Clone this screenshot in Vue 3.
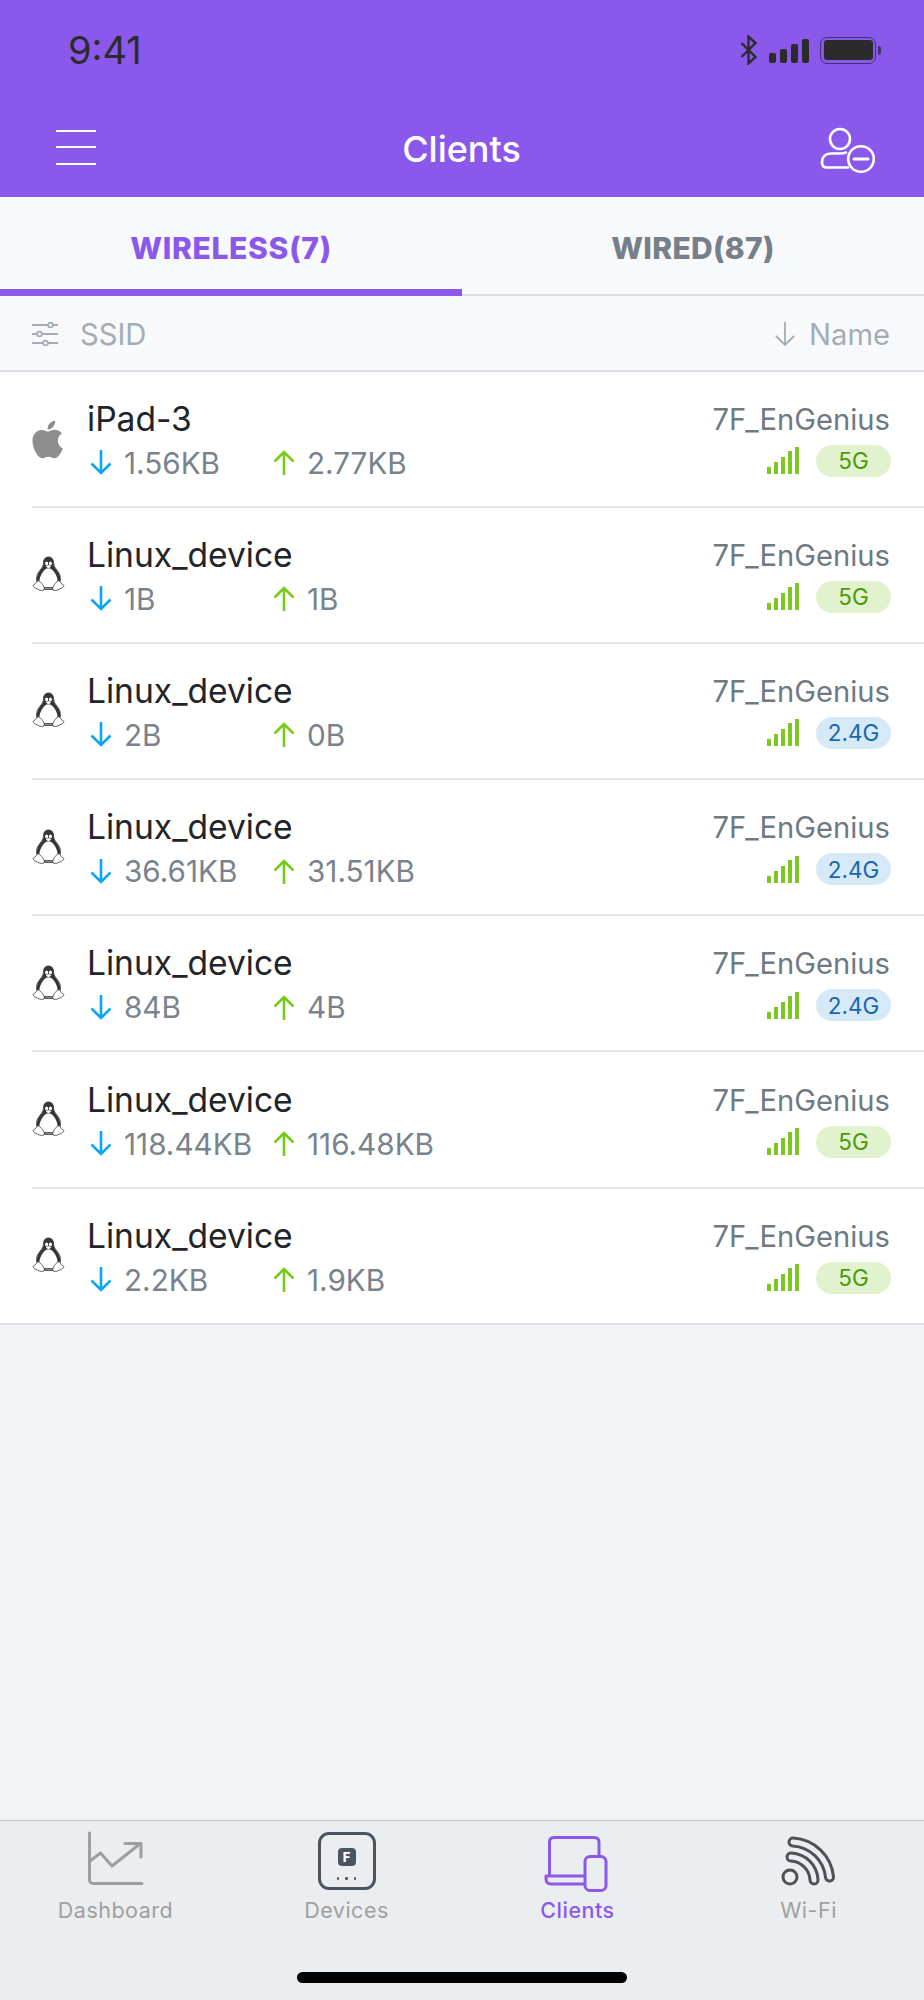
<template>
  <div class="phone">
    <header class="top">
      <div class="status">
        <span class="time">9:41</span>
        <div class="status-icons">
          <svg class="bt" viewBox="0 0 18 30" width="18" height="30">
            <path d="M1.5 8 15.5 22 8.5 28.5V1.5L15.5 8 1.5 22" fill="none" stroke="#2b2b2b" stroke-width="2.4" />
          </svg>
          <div class="cell">
            <i v-for="h in cellBars" :key="h" :style="{ height: h + 'px' }"></i>
          </div>
          <div class="battery"><div class="battery-fill"></div></div>
          <div class="battery-nub"></div>
        </div>
      </div>
      <div class="nav">
        <div class="burger"><i></i><i></i><i></i></div>
        <h1 class="title">Clients</h1>
        <svg class="person" viewBox="0 0 58 48" width="58" height="48" fill="none" stroke="#fff" stroke-width="2.6">
          <circle cx="21" cy="13" r="10" />
          <path d="M29 41.5H8C4.5 41.5 3 40 3 36.5C3 31 6.5 27.5 12 27.5H20C23 27.5 25 27.5 27 26.5" stroke-linecap="round" />
          <circle cx="42" cy="33" r="12.8" />
          <path d="M35 33H49" stroke-width="3" stroke-linecap="round" />
        </svg>
      </div>
    </header>

    <div class="tabs">
      <div class="tab active">WIRELESS(7)</div>
      <div class="tab">WIRED(87)</div>
    </div>

    <div class="sortbar">
      <div class="sort-left">
        <svg viewBox="0 0 26 24" width="26" height="24" fill="none" stroke="#a3adb8" stroke-width="1.8">
          <path d="M0 3H16M21 3H26M0 12H5M10 12H26M0 21H11M16 21H26" />
          <circle cx="18.5" cy="3" r="2.4" />
          <circle cx="7.5" cy="12" r="2.4" />
          <circle cx="13.5" cy="21" r="2.4" />
        </svg>
        <span>SSID</span>
      </div>
      <div class="sort-right">
        <svg viewBox="0 0 20 24" width="20" height="24" fill="none" stroke="#a3adb8" stroke-width="1.8">
          <path d="M10 0V23M1 14 10 23 19 14" />
        </svg>
        <span>Name</span>
      </div>
    </div>

    <div class="list">
      <div v-for="c in clients" :key="c.id" class="row">
        <div class="os">
          <svg v-if="c.os === 'apple'" viewBox="3.6 2 17.6 20" width="34" height="39">
            <path fill="#8e8e8e" d="M18.71 19.5c-.83 1.24-1.71 2.45-3.05 2.47-1.34.03-1.77-.79-3.29-.79-1.53 0-2 .77-3.27.82-1.31.05-2.3-1.32-3.14-2.53C4.25 17 2.94 12.45 4.7 9.39c.87-1.52 2.43-2.48 4.12-2.51 1.28-.02 2.5.87 3.29.87.78 0 2.26-1.07 3.81-.91.65.03 2.47.26 3.64 1.98-.09.06-2.17 1.28-2.15 3.81.03 3.02 2.65 4.03 2.68 4.04-.03.07-.42 1.44-1.38 2.83M13 3.5c.73-.83 1.94-1.46 2.94-1.5.13 1.17-.34 2.35-1.04 3.19-.69.85-1.83 1.51-2.95 1.42-.15-1.15.41-2.35 1.05-3.11z" />
          </svg>
          <svg v-else viewBox="0 0 33 38" width="33" height="38">
            <path fill="#fff" stroke="#33373b" stroke-width="0.8" d="M16.5 1C12.8 1 11.4 3.8 11.5 7.5C11.6 11 8 13.5 6 17C4.6 20 4.2 22.5 4.8 25L9 31.5H24L28.2 25C28.8 21.5 28.2 19.5 26.8 16.5C25 13.5 21.6 11 21.6 7.5C21.6 3.8 20.2 1 16.5 1Z" />
            <path fill="#33373b" d="M16.5 1C13 1 11.4 3.6 11.5 7.5C11.6 10.5 9.6 12.6 7.6 15C5.4 18.5 4.2 22 4.8 25L7.4 27C7 22.5 9 18 12 14.5L14.5 12.5H18.5L21 14.5C24 18 26 22 25.6 27L28.2 25C28.8 21 27.6 18.5 25.8 15.5C23.8 12.8 21.5 10.6 21.6 7.5C21.7 3.6 20 1 16.5 1Z" />
            <ellipse cx="14.6" cy="7.6" rx="1.5" ry="2" fill="#fff" />
            <ellipse cx="18.4" cy="7.6" rx="1.5" ry="2" fill="#fff" />
            <path fill="#fff" d="M13.8 10.2 16.5 9 19.2 10.2 16.5 12.4Z" />
            <path fill="#fff" stroke="#33373b" stroke-width="0.8" d="M6 24.5C4.8 26.5 3 28 1 29.6C1 31 3 32 5.6 33.2C8 34.4 11 35 12 33.8C12.8 32.6 12 30.4 10.6 28.6C9.4 27 8 25 6 24.5Z" />
            <path fill="#fff" stroke="#33373b" stroke-width="0.8" d="M27 24.5C28.2 26.5 30 28 32 29.6C32 31 30 32 27.4 33.2C25 34.4 22 35 21 33.8C20.2 32.6 21 30.4 22.4 28.6C23.6 27 25 25 27 24.5Z" />
            <path fill="#33373b" d="M12 32.4H21V33.8H12Z" />
          </svg>
        </div>
        <div class="info">
          <div class="name">{{ c.name }}</div>
          <div class="stats">
            <div class="stat">
              <svg viewBox="0 0 22 25" width="22" height="25" fill="none" stroke="#0aa5f5" stroke-width="2.6">
                <path d="M11 0V23M1.5 13.5 11 23 20.5 13.5" />
              </svg>
              <span>{{ c.down }}</span>
            </div>
            <div class="stat">
              <svg viewBox="0 0 22 25" width="22" height="25" fill="none" stroke="#72cc18" stroke-width="2.6">
                <path d="M11 25V2M1.5 11.5 11 2 20.5 11.5" />
              </svg>
              <span>{{ c.up }}</span>
            </div>
          </div>
        </div>
        <div class="wifi">
          <div class="ssid">{{ c.ssid }}</div>
          <div class="signal-row">
            <div class="signal">
              <i v-for="h in signalBars" :key="h" :style="{ height: h + 'px' }"></i>
            </div>
            <span class="band" :class="c.band === '5G' ? 'band-5' : 'band-24'">{{ c.band }}</span>
          </div>
        </div>
      </div>
    </div>

    <footer class="tabbar">
      <div class="items">
        <div class="item">
          <svg class="ic-dash" viewBox="0 0 60 60" width="60" height="60" fill="none" stroke="#9e9e9e" stroke-width="3" stroke-linecap="round" stroke-linejoin="round">
            <path d="M5.5 2V49C5.5 51 7 52.5 9 52.5H58" />
            <path d="M6 30 16.5 22 28 35 54.5 14" />
            <path d="M41 12.5H57V26" />
          </svg>
          <span>Dashboard</span>
        </div>
        <div class="item">
          <div class="device-box">
            <div class="device-chip">F</div>
            <div class="device-dots"><i></i><i></i><i></i></div>
          </div>
          <span>Devices</span>
        </div>
        <div class="item item-active">
          <svg class="ic-clients" viewBox="0 0 64 60" width="64" height="60" fill="none" stroke="#8b58ec" stroke-width="3" stroke-linejoin="round">
            <path d="M5.5 41V7C5.5 4 7.5 2.5 10 2.5H50C53 2.5 55 4 55 7V21" />
            <path d="M40 41H2V44C2 47 4 49 7 49H40" />
            <rect x="41" y="21.5" width="21" height="34" rx="5" />
          </svg>
          <span>Clients</span>
        </div>
        <div class="item">
          <svg class="ic-wifi" viewBox="0 0 60 60" width="60" height="60" fill="none" stroke-linecap="round">
            <path d="M12 11A39 39 0 0 1 48.5 46" stroke="#4b5258" stroke-width="11" />
            <path d="M12 11A39 39 0 0 1 48.5 46" stroke="#ebeef1" stroke-width="5" />
            <path d="M10 26A24 24 0 0 1 33 49" stroke="#4b5258" stroke-width="11" />
            <path d="M10 26A24 24 0 0 1 33 49" stroke="#ebeef1" stroke-width="5" />
            <circle cx="9" cy="46" r="7" fill="#ebeef1" stroke="#4b5258" stroke-width="3" />
          </svg>
          <span>Wi-Fi</span>
        </div>
      </div>
      <div class="home"></div>
    </footer>
  </div>
</template>

<script setup>
const cellBars = [10, 14, 19, 24];
const signalBars = [7, 12, 17, 23, 27];

const clients = [
  { id: 1, os: "apple", name: "iPad-3", down: "1.56KB", up: "2.77KB", ssid: "7F_EnGenius", band: "5G" },
  { id: 2, os: "linux", name: "Linux_device", down: "1B", up: "1B", ssid: "7F_EnGenius", band: "5G" },
  { id: 3, os: "linux", name: "Linux_device", down: "2B", up: "0B", ssid: "7F_EnGenius", band: "2.4G" },
  { id: 4, os: "linux", name: "Linux_device", down: "36.61KB", up: "31.51KB", ssid: "7F_EnGenius", band: "2.4G" },
  { id: 5, os: "linux", name: "Linux_device", down: "84B", up: "4B", ssid: "7F_EnGenius", band: "2.4G" },
  { id: 6, os: "linux", name: "Linux_device", down: "118.44KB", up: "116.48KB", ssid: "7F_EnGenius", band: "5G" },
  { id: 7, os: "linux", name: "Linux_device", down: "2.2KB", up: "1.9KB", ssid: "7F_EnGenius", band: "5G" },
];
</script>

<style>
html,
body {
  margin: 0;
  background: #f2f3f5;
}
</style>

<style scoped>
.phone {
  width: 924px;
  height: 2000px;
  display: flex;
  flex-direction: column;
  overflow: hidden;
  background: #f2f3f5;
  font-family: Inter, "Liberation Sans", sans-serif;
}

.top {
  height: 197px;
  background: #8b58ec;
  flex: none;
}
.status {
  height: 100px;
  display: flex;
  justify-content: space-between;
  padding: 32px 43px 0 68px;
  box-sizing: border-box;
}
.time {
  font-size: 38px;
  line-height: 36px;
  color: #2b2b2b;
}
.status-icons {
  display: flex;
  align-items: center;
  height: 36px;
}
.bt {
  margin-right: 11px;
}
.cell {
  display: flex;
  align-items: flex-end;
  gap: 3.5px;
  height: 24px;
  margin-right: 11px;
  margin-top: 2px;
}
.cell i {
  width: 7.5px;
  background: #2b2b2b;
  border-radius: 2px;
}
.battery {
  width: 56px;
  height: 27px;
  box-sizing: border-box;
  border: 1.5px solid #3f3566;
  border-radius: 7px;
  padding: 2.5px;
}
.battery-fill {
  height: 100%;
  background: #2b2b2b;
  border-radius: 3px;
}
.battery-nub {
  width: 3px;
  height: 9px;
  margin-left: 2px;
  background: #3f3566;
  border-radius: 0 3px 3px 0;
}

.nav {
  display: flex;
  align-items: center;
  justify-content: space-between;
  padding: 0 47px 0 56px;
  height: 97px;
}
.burger {
  width: 40px;
  display: flex;
  flex-direction: column;
  gap: 14.5px;
  margin-bottom: 3px;
}
.burger i {
  height: 2px;
  background: #fff;
}
.title {
  margin: 0 0 0 8px;
  font-size: 36px;
  font-weight: 500;
  color: #fff;
}
.person {
  margin-top: 3px;
}

.tabs {
  display: flex;
  height: 99px;
  background: #f8f9fb;
  flex: none;
}
.tab {
  flex: 1;
  display: flex;
  align-items: center;
  justify-content: center;
  box-sizing: border-box;
  padding-top: 4px;
  font-size: 30px;
  font-weight: 800;
  letter-spacing: 0.3px;
  color: #76808a;
  border-bottom: 2px solid #dcdfe3;
}
.tab.active {
  color: #8b58ec;
  letter-spacing: 0.7px;
  border-bottom: 7px solid #8b58ec;
  padding-top: 9px;
}

.sortbar {
  height: 75.5px;
  flex: none;
  box-sizing: border-box;
  display: flex;
  justify-content: space-between;
  align-items: center;
  padding: 3px 34px 0 32px;
  background: #f8f9fb;
  border-bottom: 2px solid #dcdfe3;
  color: #a3adb8;
  font-size: 29.2px;
}
.sort-left {
  display: flex;
  align-items: center;
  gap: 22px;
}
.sort-right {
  display: flex;
  align-items: center;
  gap: 14px;
}

.list {
  background: #fff;
  border-bottom: 2px solid #dcdfe3;
  flex: none;
}
.row {
  height: 136.2px;
  box-sizing: border-box;
  display: flex;
  align-items: center;
  margin-left: 32px;
  padding: 4px 34px 0 0;
  border-bottom: 2px solid #e3e5e8;
}
.row:last-child {
  height: 134.2px;
  border-bottom: none;
}
.os {
  width: 33px;
  flex: none;
  display: flex;
  justify-content: center;
  margin-top: -3px;
}
.info {
  margin-left: 23px;
  flex: 1;
}
.name {
  margin-left: -1px;
  font-size: 33.6px;
  line-height: 40px;
  color: #212529;
}
.stats {
  display: flex;
  margin-top: 4px;
  margin-left: 2px;
}
.stat {
  display: flex;
  align-items: center;
  gap: 12px;
  font-size: 29.7px;
  line-height: 40px;
  color: #79838d;
}
.stat:first-child {
  width: 183px;
}
.wifi {
  display: flex;
  flex-direction: column;
  align-items: flex-end;
  margin-bottom: 5px;
}
.ssid {
  font-size: 29.2px;
  line-height: 40px;
  color: #6f7982;
}
.signal-row {
  display: flex;
  align-items: center;
  gap: 17px;
  margin-top: 5px;
  margin-right: -1px;
}
.signal {
  display: flex;
  align-items: flex-end;
  gap: 2.5px;
  height: 27px;
}
.signal i {
  width: 4.5px;
  background: #7ac720;
}
.band {
  min-width: 75px;
  height: 32px;
  box-sizing: border-box;
  display: flex;
  align-items: center;
  justify-content: center;
  border-radius: 16px;
  font-size: 22.5px;
}
.band-5 {
  background: #e1f2cf;
  color: #4c9a06;
}
.band-24 {
  background: #d6e9f7;
  color: #1668b0;
}

.tabbar {
  margin-top: auto;
  height: 180px;
  flex: none;
  box-sizing: border-box;
  background: #ebeef1;
  border-top: 1.5px solid #c5c8cb;
  position: relative;
}
.items {
  display: grid;
  grid-template-columns: repeat(4, 1fr);
}
.item {
  display: flex;
  flex-direction: column;
  align-items: center;
  padding-top: 10px;
  font-size: 21.5px;
  letter-spacing: 0.5px;
  color: #a0a0a0;
}
.item svg,
.device-box {
  display: block;
  flex: none;
}
.ic-dash {
  margin-left: -4px;
}
.ic-clients {
  margin: 4px 0 -4px -4px;
}
.ic-wifi {
  margin-left: 4px;
}
.item span {
  margin-top: 4px;
  line-height: 30px;
}
.item-active {
  color: #8b58ec;
  font-weight: 500;
}
.device-box {
  width: 58px;
  height: 58px;
  box-sizing: border-box;
  border: 3px solid #4b5560;
  border-radius: 11px;
  margin: 1px 0;
  display: flex;
  flex-direction: column;
  align-items: center;
  padding-top: 13px;
}
.device-chip {
  width: 18px;
  height: 18px;
  border-radius: 4px;
  background: #4b5560;
  color: #fff;
  font-size: 13px;
  font-weight: 800;
  line-height: 18px;
  letter-spacing: 0;
  text-align: center;
}
.device-dots {
  display: flex;
  gap: 6px;
  margin-top: 11px;
}
.device-dots i {
  width: 2.5px;
  height: 2.5px;
  background: #4b5560;
  border-radius: 50%;
}
.home {
  position: absolute;
  left: 297px;
  top: 150.5px;
  width: 330px;
  height: 11px;
  border-radius: 6px;
  background: #000;
}
</style>
